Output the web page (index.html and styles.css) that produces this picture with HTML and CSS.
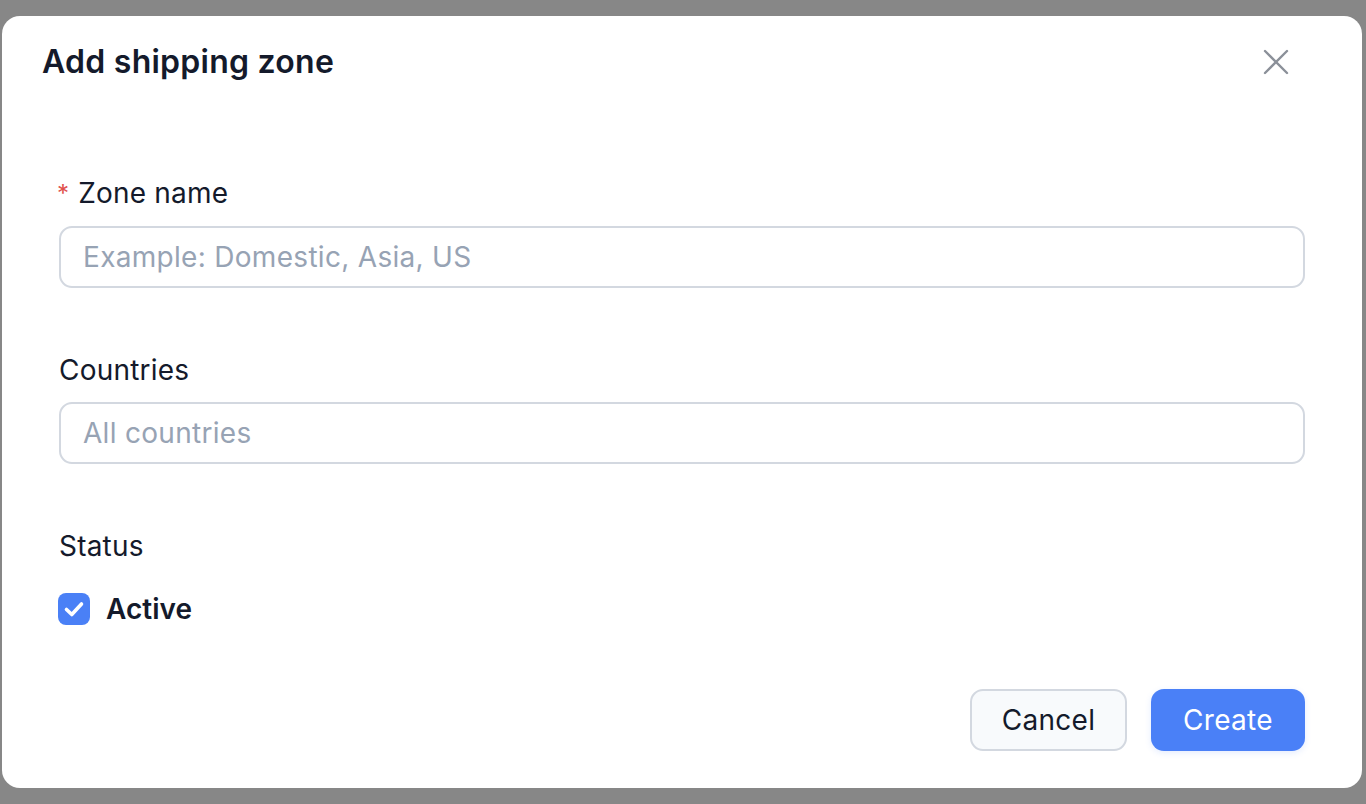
FILE: index.html
```html
<!DOCTYPE html>
<html>
<head>
<meta charset="UTF-8">
<title>Add shipping zone</title>
<link rel="stylesheet" href="styles.css">
</head>
<body>

    <div class="modal">
        <div class="modal-header">
            <h2>Add shipping zone</h2>
            <button type="button" class="close" aria-label="Close">
                <svg width="28" height="28" viewBox="0 0 28 28">
                    <path d="M3 3 L25 25 M25 3 L3 25" stroke="#8b9099" stroke-width="2.4" stroke-linecap="round" fill="none"/>
                </svg>
            </button>
        </div>

        <div class="modal-body">
            <div class="field">
                <label for="zone"><span class="req">*</span>Zone name</label>
                <input type="text" id="zone" placeholder="Example: Domestic, Asia, US">
            </div>

            <div class="field">
                <label for="countries">Countries</label>
                <input type="text" id="countries" placeholder="All countries">
            </div>

            <div class="field">
                <label>Status</label>
                <div class="check-row">
                    <span class="checkbox">
                        <svg width="32" height="32" viewBox="0 0 32 32">
                            <path d="M8.5 16.5 L13.8 21.5 L23.5 11" stroke="#fff" stroke-width="3.6" stroke-linecap="round" stroke-linejoin="round" fill="none"/>
                        </svg>
                    </span>
                    <span class="check-label">Active</span>
                </div>
            </div>
        </div>

        <div class="modal-footer">
            <button type="button" class="btn cancel">Cancel</button>
            <button type="button" class="btn create">Create</button>
        </div>
    </div>

</body>
</html>
```
FILE: styles.css
```css
* {
    box-sizing: border-box;
}

body {
    margin: 0;
    height: 804px;
    background-color: #878787;
    font-family: Inter, "Liberation Sans", sans-serif;
    color: #111827;
    padding: 16px 4px 16px 2px;
}

.modal {
    background-color: #fff;
    border-radius: 18px;
    height: 772px;
    display: flex;
    flex-direction: column;
}

.modal-header {
    display: flex;
    align-items: center;
    justify-content: space-between;
    padding: 28px 72px 0 40px;
}

.modal-header h2 {
    margin: 0;
    font-size: 32px;
    line-height: 36px;
    font-weight: 600;
    letter-spacing: 0.25px;
    color: #141a2b;
}

.close {
    background: none;
    border: none;
    padding: 0;
    width: 28px;
    height: 28px;
    cursor: pointer;
}

.modal-body {
    padding: 97px 57px 0 57px;
    flex: 1;
}

.field {
    margin-bottom: 66px;
}

.field:last-child {
    margin-bottom: 0;
}

.field label {
    display: block;
    font-size: 28px;
    line-height: 32px;
    letter-spacing: 0.2px;
    color: #141a2b;
    margin-bottom: 16px;
}

.req {
    color: #e0514c;
    font-size: 24px;
    margin-right: 9px;
    margin-left: -2px;
    vertical-align: 1px;
}

.field input {
    display: block;
    width: 100%;
    height: 62px;
    border: 2px solid #d3d8e0;
    border-radius: 13px;
    padding: 0 22px;
    font-family: inherit;
    font-size: 28px;
    letter-spacing: 0.3px;
    color: #141a2b;
    outline: none;
}

.field input::placeholder {
    color: #97a3b4;
}

.check-row {
    display: flex;
    align-items: center;
    height: 32px;
    margin-top: 31px;
}

.checkbox {
    width: 32px;
    height: 32px;
    border-radius: 8px;
    background-color: #4a80f6;
    display: inline-flex;
    margin-left: -1px;
    margin-right: 16px;
}

.check-label {
    font-size: 28px;
    font-weight: 600;
    color: #141a2b;
}

.modal-footer {
    display: flex;
    justify-content: flex-end;
    gap: 24px;
    padding: 0 57px 37px 0;
}

.btn {
    height: 62px;
    border-radius: 13px;
    font-family: inherit;
    font-size: 28px;
    letter-spacing: 0.3px;
    cursor: pointer;
}

.cancel {
    width: 157px;
    background-color: #f8fafc;
    border: 2px solid #d3d8e0;
    color: #141a2b;
}

.create {
    width: 154px;
    background-color: #4a80f7;
    border: none;
    color: #fff;
    box-shadow: 0 2px 6px rgba(74, 128, 247, 0.15);
}
```
